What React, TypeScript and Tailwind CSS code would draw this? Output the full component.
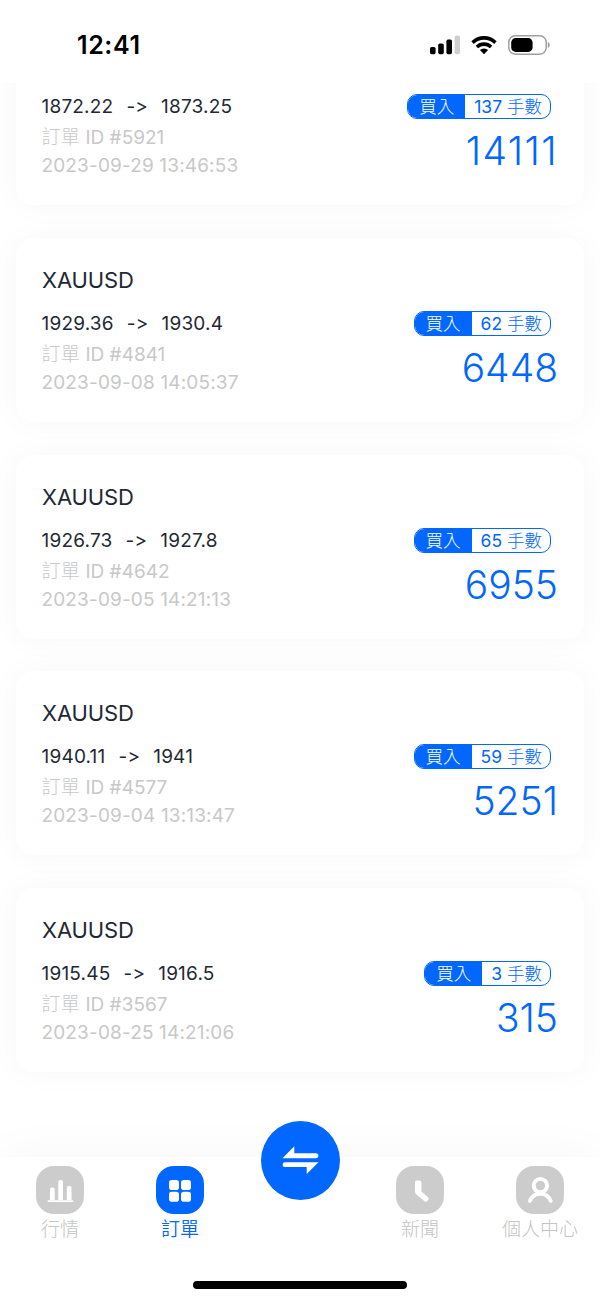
interface Order {
  id: string;
  symbol: string | null;
  open: string;
  close: string;
  time: string;
  lots: number;
  profit: string;
}

const orders: Order[] = [
  { id: "5921", symbol: null, open: "1872.22", close: "1873.25", time: "2023-09-29 13:46:53", lots: 137, profit: "14111" },
  { id: "4841", symbol: "XAUUSD", open: "1929.36", close: "1930.4", time: "2023-09-08 14:05:37", lots: 62, profit: "6448" },
  { id: "4642", symbol: "XAUUSD", open: "1926.73", close: "1927.8", time: "2023-09-05 14:21:13", lots: 65, profit: "6955" },
  { id: "4577", symbol: "XAUUSD", open: "1940.11", close: "1941", time: "2023-09-04 13:13:47", lots: 59, profit: "5251" },
  { id: "3567", symbol: "XAUUSD", open: "1915.45", close: "1916.5", time: "2023-08-25 14:21:06", lots: 3, profit: "315" },
];

function StatusBar() {
  return (
    <header className="relative z-10 flex h-[83px] shrink-0 items-center justify-between bg-white pt-[7px] pr-[50px] pb-px pl-[77px] text-black">
      <span className="pt-[2px] text-[25px] leading-none font-semibold tracking-[0.6px]">12:41</span>
      <div className="flex items-center">
        <svg width="30" height="20" viewBox="0 0 30 20" className="mr-[11px]">
          <rect x="0" y="12" width="5.6" height="7.2" rx="1.6" />
          <rect x="8.2" y="8.4" width="5.6" height="10.8" rx="1.6" />
          <rect x="16.4" y="4.6" width="5.6" height="14.6" rx="1.6" />
          <rect x="24.6" y="0.6" width="5.4" height="18.6" rx="1.6" fill="#cfcfcf" />
        </svg>
        <svg width="26" height="20" viewBox="0 0 26 20" className="mr-[11px]">
          <g fill="none" stroke="#000" strokeWidth="3.6">
            <path d="M1.6 7.6 A16.2 16.2 0 0 1 24.4 7.6" />
            <path d="M5.9 12 A10.2 10.2 0 0 1 20.1 12" />
          </g>
          <path d="M13 19.2 L8.9 15.1 A6 6 0 0 1 17.1 15.1 Z" />
        </svg>
        <svg width="42" height="20" viewBox="0 0 42 20">
          <rect x="0.8" y="0.8" width="37.4" height="18.4" rx="6.4" fill="none" stroke="#a0a0a0" strokeWidth="1.5" />
          <rect x="3.2" y="3.1" width="21.4" height="13.8" rx="4.4" />
          <path d="M39.8 7 C42.4 8 42.4 12 39.8 13 Z" fill="#a0a0a0" />
        </svg>
      </div>
    </header>
  );
}

function OrderCard({ order }: { order: Order }) {
  return (
    <article className="flex h-[184px] shrink-0 flex-col justify-end rounded-[18px] bg-white px-[26px] pb-[26px] shadow-[0_0_32px_rgba(0,0,0,0.035)]">
      {order.symbol && <h2 className="pb-[13px] text-[22px] leading-[30px] tracking-[-0.1px] text-[#1f2933]">{order.symbol}</h2>}
      <div className="flex h-[88px] justify-between">
        <div className="-ml-[0.5px] pt-px text-[19px] whitespace-nowrap">
          <p className="flex gap-[13px] leading-[30px] tracking-[0.2px] text-[#1f2933]">
            <span>{order.open}</span>
            <span className="[font-feature-settings:'calt'_0]">-&gt;</span>
            <span>{order.close}</span>
          </p>
          <p className="pt-[2px] leading-[28px] text-[#c8c8c8]">
            <span className="font-light tracking-[0.3px]">訂單</span> ID #{order.id}
          </p>
          <p className="leading-[27px] tracking-[0.15px] text-[#c8c8c8]">{order.time}</p>
        </div>
        <div className="flex flex-col items-end pt-[3px]">
          <div className="mr-[7px] flex h-[25px] overflow-hidden rounded-[10px] border border-[#0167ff] text-[17.5px] leading-[23px] whitespace-nowrap">
            <span className="w-[57px] bg-[#0167ff] text-center font-light text-white">買入</span>
            <span className="pr-[8px] pl-[9px] text-[#0167ff]">
              {order.lots} <span className="font-light">手數</span>
            </span>
          </div>
          <strong
            className={
              order.profit.length > 4
                ? "pt-[8px] text-[39px] leading-[48px] font-light tracking-[1.4px] text-[#0167ff]"
                : "pt-[8px] text-[39px] leading-[48px] font-light text-[#0167ff]"
            }
          >
            {order.profit}
          </strong>
        </div>
      </div>
    </article>
  );
}

function MarketIcon() {
  return (
    <svg width="48" height="48" viewBox="0 0 48 48" fill="#fff">
      <path d="M14 34V23.5a2 2 0 0 1 2-2h.7a2 2 0 0 1 2 2V34zM22.3 34V16a2 2 0 0 1 2-2h.7a2 2 0 0 1 2 2v18zM30.8 34V22a2 2 0 0 1 2-2h.7a2 2 0 0 1 2 2v12z" />
      <rect x="11.5" y="34.3" width="26" height="1.6" rx="0.8" />
    </svg>
  );
}

function OrdersIcon() {
  return (
    <svg width="48" height="48" viewBox="0 0 48 48" fill="#fff">
      <rect x="13" y="14" width="10" height="10" rx="2.8" />
      <rect x="25" y="14" width="10" height="10" rx="2.8" />
      <rect x="13" y="25.7" width="10" height="10" rx="2.8" />
      <rect x="25" y="25.7" width="10" height="10" rx="2.8" />
    </svg>
  );
}

function NewsIcon() {
  return (
    <svg width="48" height="48" viewBox="0 0 48 48" fill="#fff">
      <path d="M19 16.2a1.8 1.8 0 0 1 1.8-1.8h2.8a1.8 1.8 0 0 1 1.8 1.8V25.4l6.2 5.4a2.7 2.7 0 0 1-3.7 4L19.9 28a2.6 2.6 0 0 1-.9-2z" />
    </svg>
  );
}

function ProfileIcon() {
  return (
    <svg width="48" height="48" viewBox="0 0 48 48" fill="none" stroke="#fff" strokeWidth="3.9" strokeLinecap="round">
      <circle cx="24.4" cy="19.6" r="6.7" />
      <path d="M13.9 34.9A11.2 11.2 0 0 1 34.7 34.9" />
    </svg>
  );
}

const tabs = [
  { label: "行情", icon: <MarketIcon />, active: false },
  { label: "訂單", icon: <OrdersIcon />, active: true },
  null,
  { label: "新聞", icon: <NewsIcon />, active: false },
  { label: "個人中心", icon: <ProfileIcon />, active: false },
];

function TabBar() {
  return (
    <nav className="relative z-10 flex h-[144px] shrink-0 flex-col bg-white shadow-[0_0_50px_rgba(0,0,0,0.04)]">
      <div className="grid grid-cols-5 pt-[9px]">
        {tabs.map((tab) =>
          tab ? (
            <div key={tab.label} className="flex flex-col items-center">
              <div className={tab.active ? "rounded-[18px] bg-[#0167ff]" : "rounded-[18px] bg-[#cccccc]"}>{tab.icon}</div>
              <span
                className={
                  tab.active
                    ? "text-[19px] leading-[31px] font-[350] text-[#0167ff]"
                    : "text-[19px] leading-[31px] font-light text-[#c4c4c4]"
                }
              >
                {tab.label}
              </span>
            </div>
          ) : (
            <div key="trade" className="flex justify-center">
              <button className="-mt-[45px] size-[79px] rounded-full bg-[#0167ff]">
                <svg width="79" height="79" viewBox="0 0 79 79" fill="#fff">
                  <path d="M21.5 37.2 L33.3 25.3 V32.3 H55a2.45 2.45 0 0 1 0 4.9 Z" />
                  <path d="M57.5 41.2 L45.7 53.1 V46.1 H24a2.45 2.45 0 0 1 0-4.9 Z" />
                </svg>
              </button>
            </div>
          )
        )}
      </div>
      {/* home indicator */}
      <div className="mt-auto mb-[12px] h-[8px] w-[214px] self-center rounded-full bg-black" />
    </nav>
  );
}

export default function App() {
  return (
    <div className="flex h-[1301px] w-[600px] flex-col overflow-hidden bg-white font-['Inter','Noto_Sans_CJK_TC',sans-serif]">
      <StatusBar />
      <main className="flex min-h-0 flex-1 flex-col justify-end gap-[32.7px] overflow-hidden px-[16px] pb-[85px]">
        {orders.map((order) => (
          <OrderCard key={order.id} order={order} />
        ))}
      </main>
      <TabBar />
    </div>
  );
}
